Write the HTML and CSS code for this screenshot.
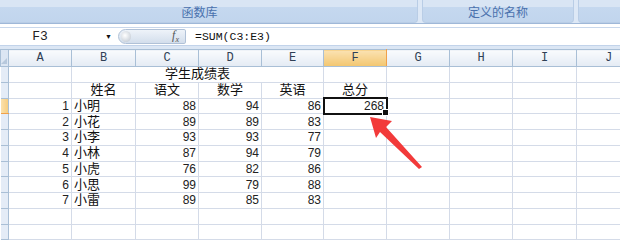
FILE: index.html
```html
<!DOCTYPE html>
<html lang="zh-CN">
<head>
    <meta charset="UTF-8">
    <title>学生成绩表</title>
    <link rel="stylesheet" href="styles.css">
</head>
<body>
    <div class="ribbon">
        <div class="group group-func"><span class="group-label">函数库</span></div>
        <div class="group group-names"><span class="group-label">定义的名称</span></div>
        <div class="group group-more"></div>
    </div>

    <div class="formula-bar">
        <div class="namebox">
            <span class="cellref">F3</span>
            <span class="dropdown">&#9660;</span>
        </div>
        <div class="fx-pill">
            <span class="knob"></span>
            <span class="fx">f<sub>x</sub></span>
        </div>
        <div class="formula">=SUM(C3:E3)</div>
    </div>
    <div class="bar-gap"></div>

    <div class="sheet-wrap">
        <table class="sheet">
            <colgroup>
                <col class="c-rh">
                <col class="c-63">
                <col class="c-64">
                <col class="c-63">
                <col class="c-63">
                <col class="c-62">
                <col class="c-63">
                <col class="c-63">
                <col class="c-63">
                <col class="c-64">
                <col class="c-64">
            </colgroup>
            <tr class="col-heads">
                <th class="corner"><span class="corner-tri"></span></th>
                <th>A</th><th>B</th><th>C</th><th>D</th><th>E</th>
                <th class="active">F</th><th>G</th><th>H</th><th>I</th><th>J</th>
            </tr>
            <tr>
                <th class="rh"></th>
                <td></td><td colspan="4" class="center">学生成绩表</td>
                <td></td><td></td><td></td><td></td><td></td>
            </tr>
            <tr>
                <th class="rh"></th>
                <td></td><td class="center">姓名</td><td class="center">语文</td><td class="center">数学</td><td class="center">英语</td><td class="center">总分</td>
                <td></td><td></td><td></td><td></td>
            </tr>
            <tr>
                <th class="rh active"></th>
                <td class="num">1</td><td>小明</td><td class="num">88</td><td class="num">94</td><td class="num">86</td>
                <td class="num selected">268<span class="fill-handle"></span></td>
                <td></td><td></td><td></td><td></td>
            </tr>
            <tr>
                <th class="rh"></th>
                <td class="num">2</td><td>小花</td><td class="num">89</td><td class="num">89</td><td class="num">83</td>
                <td></td><td></td><td></td><td></td><td></td>
            </tr>
            <tr>
                <th class="rh"></th>
                <td class="num">3</td><td>小李</td><td class="num">93</td><td class="num">93</td><td class="num">77</td>
                <td></td><td></td><td></td><td></td><td></td>
            </tr>
            <tr>
                <th class="rh"></th>
                <td class="num">4</td><td>小林</td><td class="num">87</td><td class="num">94</td><td class="num">79</td>
                <td></td><td></td><td></td><td></td><td></td>
            </tr>
            <tr>
                <th class="rh"></th>
                <td class="num">5</td><td>小虎</td><td class="num">76</td><td class="num">82</td><td class="num">86</td>
                <td></td><td></td><td></td><td></td><td></td>
            </tr>
            <tr>
                <th class="rh"></th>
                <td class="num">6</td><td>小思</td><td class="num">99</td><td class="num">79</td><td class="num">88</td>
                <td></td><td></td><td></td><td></td><td></td>
            </tr>
            <tr>
                <th class="rh"></th>
                <td class="num">7</td><td>小雷</td><td class="num">89</td><td class="num">85</td><td class="num">83</td>
                <td></td><td></td><td></td><td></td><td></td>
            </tr>
            <tr>
                <th class="rh"></th>
                <td></td><td></td><td></td><td></td><td></td><td></td><td></td><td></td><td></td><td></td>
            </tr>
            <tr>
                <th class="rh"></th>
                <td></td><td></td><td></td><td></td><td></td><td></td><td></td><td></td><td></td><td></td>
            </tr>
        </table>

        <!-- 红色箭头指向 F3 -->
        <svg class="arrow" width="70" height="70" viewBox="360 110 70 70">
            <polygon points="370,117 392,121 386,127 422,167 419,169 380,132 376,138" fill="#f23a3a"/>
        </svg>
    </div>
</body>
</html>
```

FILE: styles.css
```css
body {
    margin: 0;
    width: 620px;
    height: 244px;
    overflow: hidden;
    background: #ffffff;
    font-family: "Liberation Sans", "Noto Sans CJK SC", sans-serif;
}

/* 功能区 */
.ribbon {
    display: flex;
    gap: 4px;
    height: 23px;
    background: #dde8f6;
    border-bottom: 1px solid #9fb8d8;
    overflow: hidden;
}
.group {
    display: flex;
    flex-direction: column;
    justify-content: flex-end;
    background: linear-gradient(#d9e5f4 0, #d9e5f4 7px, #c5d8ef 7px, #c1d5ed 100%);
    border: 1px solid #b9cde6;
    border-top: none;
    border-radius: 0 0 4px 4px;
    box-sizing: border-box;
}
.group-func {
    width: 437px;
    margin-left: -19px;
}
.group-names {
    width: 152px;
}
.group-more {
    flex: 1;
    margin-right: -10px;
}
.group-label {
    height: 16px;
    line-height: 15px;
    text-align: center;
    font-size: 12px;
    color: #4a71ad;
}

/* 编辑栏 */
.formula-bar {
    display: flex;
    align-items: center;
    height: 17px;
    margin-top: 3px;
    background: #ffffff;
    border-top: 1px solid #c9d8ec;
}
.namebox {
    display: flex;
    align-items: center;
    width: 118px;
    height: 100%;
}
.cellref {
    width: 80px;
    text-align: center;
    font-family: "Liberation Mono", monospace;
    font-size: 13px;
    color: #222;
}
.dropdown {
    margin-left: 25px;
    font-size: 7px;
    color: #111;
}
.fx-pill {
    position: relative;
    display: flex;
    align-items: center;
    justify-content: flex-end;
    width: 68px;
    height: 15px;
    box-sizing: border-box;
    padding-right: 6px;
    background: linear-gradient(#eef3f9, #d3deec);
    border: 1px solid #b0c1d7;
    border-radius: 8px 2px 2px 8px;
}
.knob {
    position: absolute;
    left: 2px;
    top: 1px;
    width: 10px;
    height: 11px;
    border-radius: 50%;
    background: radial-gradient(circle at 40% 40%, #ffffff, #b9c2cd);
}
.fx {
    font-family: "Liberation Serif", serif;
    font-style: italic;
    font-size: 12px;
    color: #555;
}
.fx sub {
    font-size: 8px;
}
.formula {
    padding-left: 9px;
    font-family: "Liberation Mono", monospace;
    font-size: 11.5px;
    color: #111;
}
.bar-gap {
    height: 3px;
    background: #dbe6f4;
    border-top: 1px solid #c2d3ea;
}

/* 工作表 */
.sheet-wrap {
    position: relative;
}
.sheet {
    border-collapse: collapse;
    table-layout: fixed;
    width: 640px;
    font-size: 13px;
    color: #111;
}
.c-rh { width: 8px; }
.c-62 { width: 62px; }
.c-63 { width: 63px; }
.c-64 { width: 64px; }
.sheet td {
    height: 14.75px;
    padding: 0 2px;
    border: 1px solid #d4dbe8;
    white-space: nowrap;
    overflow: visible;
    line-height: 14px;
}
.sheet td.num {
    font-size: 12px;
    color: #222;
}
.sheet .col-heads th {
    height: 16px;
    padding: 0;
    font-family: "Liberation Mono", monospace;
    font-weight: normal;
    font-size: 12px;
    color: #2f3f55;
    background: linear-gradient(#f9fbfd, #e4ebf4);
    border: 1px solid #a9bfd6;
}
.sheet .col-heads th.active {
    background: linear-gradient(#fbe2b2, #f3c66f);
    border-left-color: #f0a04a;
    border-right-color: #f0a04a;
}
.sheet .col-heads th.corner {
    position: relative;
    background: #dce6f3;
}
.corner-tri {
    position: absolute;
    right: 1px;
    bottom: 2px;
    border-left: 6px solid transparent;
    border-bottom: 6px solid #b7c8dc;
}
.sheet th.rh {
    padding: 0;
    background: #e4ecf7;
    border: 1px solid #a9bfd6;
    border-left: none;
}
.sheet th.rh.active {
    background: linear-gradient(90deg, #fbe1ac, #f6cd80);
    border-bottom-color: #f0a04a;
}
.center {
    text-align: center;
}
.num {
    text-align: right;
}
.sheet td.selected {
    position: relative;
    outline: 2px solid #111;
    outline-offset: -1px;
}
.fill-handle {
    position: absolute;
    right: -3px;
    bottom: -3px;
    width: 5px;
    height: 5px;
    background: #111;
    border: 1px solid #fff;
}
.arrow {
    position: absolute;
    left: 360px;
    top: 61px;
}
```
